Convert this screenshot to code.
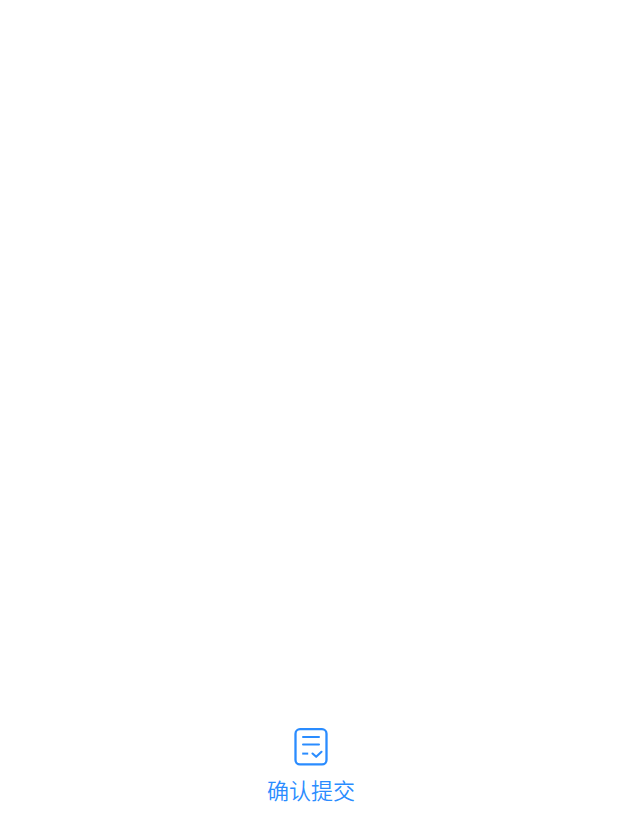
<main>
  <button class="submit" type="button">
    <svg width="34" height="38" viewBox="0 0 34 38" fill="none" stroke="currentColor" stroke-width="2" stroke-linecap="round" stroke-linejoin="round" aria-hidden="true">
      <rect x="1.5" y="1.2" width="31" height="35.2" rx="4.5" stroke-width="2.3" />
      <path d="M9 9h16M9 16.5h16" />
      <path d="M8.2 25.6h6" stroke-linecap="butt" />
      <path d="M18.5 25.5l3.7 3.3 5.3-5" stroke-width="2.1" />
    </svg>
    <span>确认提交</span>
  </button>
</main>

<style>
  :global(body) {
    margin: 0;
    background: #fff;
  }
  main {
    box-sizing: border-box;
    height: 826px;
    padding: 0 1px 21px 0;
    display: flex;
    align-items: flex-end;
    justify-content: center;
    background: #fff;
  }
  .submit {
    display: flex;
    flex-direction: column;
    align-items: center;
    gap: 7px;
    padding: 0;
    border: 0;
    background: none;
    color: #2a8cff;
    font: 350 22px/32px "Noto Sans CJK SC", sans-serif;
  }
  svg {
    display: block;
  }
</style>
